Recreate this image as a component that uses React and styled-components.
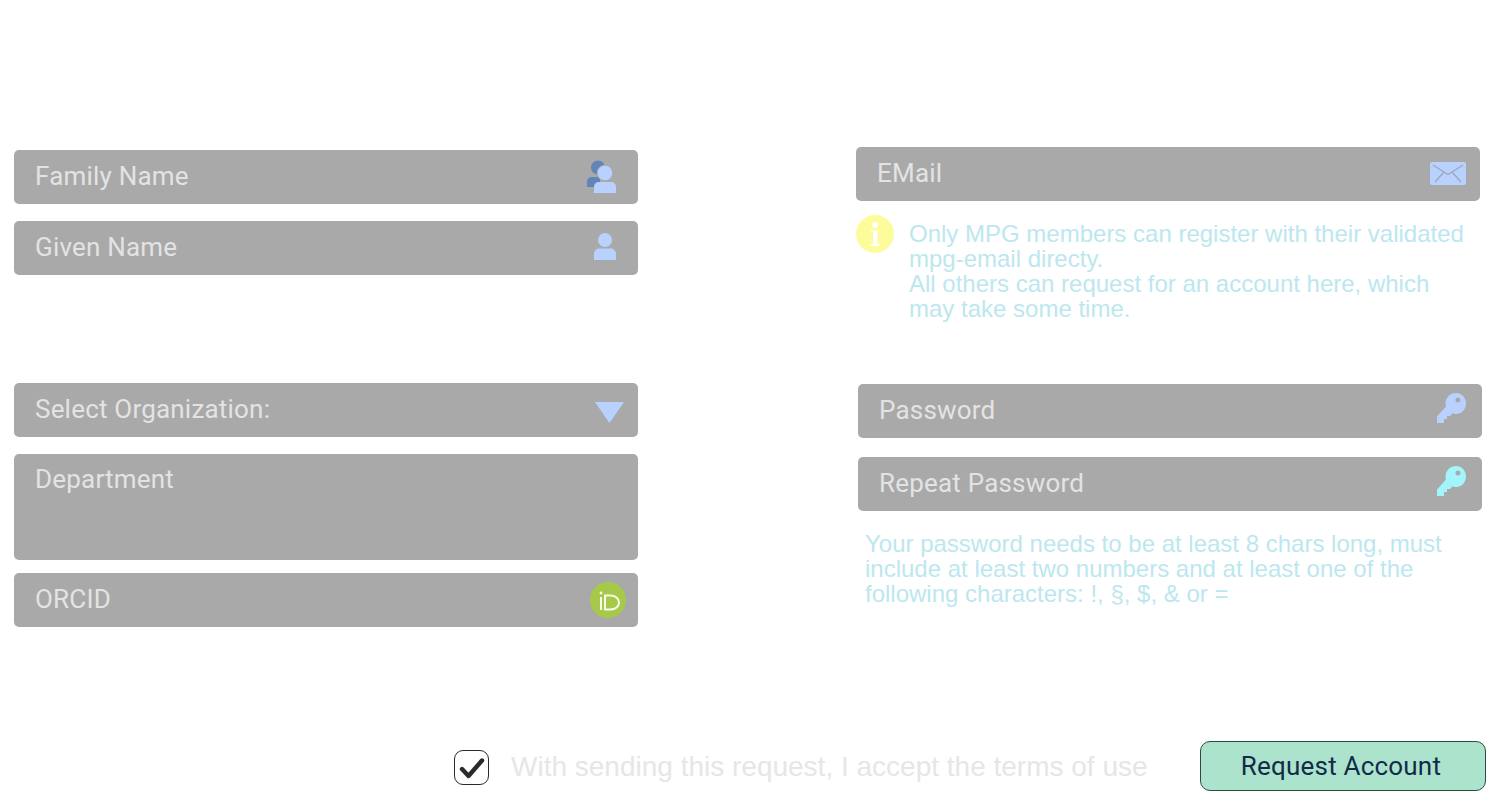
import React from "react";
import styled, { createGlobalStyle } from "styled-components";

const Global = createGlobalStyle`
  html, body { margin: 0; padding: 0; background: #fff; }
  body { font-family: "Roboto", sans-serif; }
`;

const Page = styled.div`
  width: 1486px;
  height: 791px;
  overflow: hidden;
  display: flex;
  flex-direction: column;
`;

const Columns = styled.div`
  display: flex;
  height: 741px;
`;

const LeftColumn = styled.div`
  width: 624px;
  margin-left: 14px;
  padding-top: 150px;
  display: flex;
  flex-direction: column;
`;

const RightColumn = styled.div`
  width: 626px;
  margin-left: 218px;
  padding-top: 147px;
  display: flex;
  flex-direction: column;
`;

const Field = styled.div`
  box-sizing: border-box;
  flex: none;
  width: 624px;
  height: ${(p) => p.$height || 54}px;
  margin-top: ${(p) => p.$top || 0}px;
  margin-left: ${(p) => p.$left || 0}px;
  padding: ${(p) => (p.$tall ? "8px" : "0")} 12px 2px 21px;
  background: #a9a9a9;
  border-radius: 5px;
  display: flex;
  align-items: ${(p) => (p.$tall ? "flex-start" : "center")};
  justify-content: space-between;
  color: #e3e3e3;
  font-size: 26px;
  letter-spacing: 0.2px;
  line-height: 34px;
`;

const IconSlot = styled.span`
  display: flex;
  margin-right: ${(p) => p.$right || 0}px;
  margin-top: ${(p) => p.$down || 0}px;
`;

const InfoRow = styled.div`
  display: flex;
  height: 104px;
  margin-top: 14px;
`;

const InfoText = styled.p`
  margin: 5.6px 0 0 15px;
  width: 570px;
  color: #bce7ef;
  font: 24px/25px "Liberation Sans", sans-serif;
`;

const PasswordNote = styled.p`
  margin: 20px 0 0 9px;
  width: 610px;
  color: #bce7ef;
  font: 24px/25px "Liberation Sans", sans-serif;
`;

const Footer = styled.div`
  display: flex;
  align-items: center;
  height: 50px;
  padding-left: 454px;
`;

const Check = styled.span`
  box-sizing: border-box;
  width: 35px;
  height: 35px;
  margin-top: 3px;
  border: 1px solid #2b2b2b;
  border-radius: 9px;
  display: flex;
  align-items: center;
  justify-content: center;
`;

const Terms = styled.span`
  margin-left: 22px;
  padding-top: 2px;
  width: 667px;
  flex: none;
  padding-right: 22px;
  color: #e6e6e6;
  font: 28px/34px "Liberation Sans", sans-serif;
  white-space: nowrap;
`;

const SubmitButton = styled.button`
  box-sizing: border-box;
  flex: none;
  width: 286px;
  height: 50px;
  padding: 0 4px 0 0;
  background: #ace3cd;
  border: 1px solid #2e4a44;
  border-radius: 10px;
  color: #122c48;
  font: 26px "Roboto", sans-serif;
  letter-spacing: 0.2px;
`;

const PairIcon = () => (
  <svg width="29" height="33" viewBox="0 0 29 33">
    <g fill="#6384b8">
      <circle cx="11" cy="7.500" r="7" />
      <path d="M0 27v-5c0-3 2-5 5-5h8v10z" />
    </g>
    <circle cx="18" cy="13" r="7.800" fill="#b8d1ff" stroke="#a9a9a9" strokeWidth="1" />
    <path d="M7 33v-6c0-3 2-5 5-5h12c3 0 5 2 5 5v6z" fill="#b8d1ff" />
  </svg>
);

const PersonIcon = () => (
  <svg width="22" height="27" viewBox="0 0 22 27">
    <circle cx="11" cy="7" r="7" fill="#b8d1ff" />
    <path d="M0 27v-6c0-3 2-5.500 5-5.500h12c3 0 5 2.500 5 5.500v6z" fill="#b8d1ff" />
  </svg>
);

const TriangleIcon = () => (
  <svg width="29" height="21" viewBox="0 0 29 21">
    <path d="M0 0h29L14.500 21z" fill="#b8d1ff" />
  </svg>
);

const OrcidIcon = () => (
  <svg width="36" height="36" viewBox="0 0 36 36">
    <circle cx="18" cy="18" r="18" fill="#a6c94a" />
    <g fill="none" stroke="#f7faec" strokeWidth="2">
      <path d="M11 15v13" />
      <path d="M15 13.500v14h5.500c4.800 0 8.500-3 8.500-7s-3.700-7-8.500-7z" />
    </g>
    <circle cx="11" cy="11" r="1.400" fill="#f7faec" />
  </svg>
);

const MailIcon = () => (
  <svg width="36" height="23" viewBox="0 0 36 23">
    <rect width="36" height="23" rx="2" fill="#b8d1ff" />
    <path d="M3 3l15 9.500L33 3M5 20l9-10M31 20L22 10" fill="none" stroke="#a0a6b4" strokeWidth="1.200" />
  </svg>
);

const KeyIcon = ({ color }) => (
  <svg width="29" height="30" viewBox="0 0 29 30">
    <path
      fillRule="evenodd"
      fill={color}
      d="M19 0c5.800 0 10 4.700 10 10.500S24.800 21 19 21c-1.500 0-2.500-.3-3.500-.8L13 23h-3v3H7v4H0v-6.500L9 13.500c-.4-1-.5-2-.5-3C8.500 4.700 13.200 0 19 0zm2 4.500a2.500 2.500 0 1 0 0 5 2.500 2.500 0 0 0 0-5z"
    />
  </svg>
);

const InfoIcon = () => (
  <svg width="38" height="38" viewBox="0 0 38 38">
    <circle cx="19" cy="19" r="19" fill="#fcfc9b" />
    <circle cx="19" cy="10" r="3" fill="#fff" />
    <path d="M15 15.500h6.500v14H24v1.500h-9.500v-1.500H17v-12.500h-2z" fill="#fff" />
  </svg>
);

const CheckIcon = () => (
  <svg width="26" height="22" viewBox="0 0 26 22">
    <path d="M3 12l6.500 7L23 3.500" fill="none" stroke="#2b2b2b" strokeWidth="4.400" strokeLinecap="round" strokeLinejoin="round" />
  </svg>
);

export default function App() {
  return (
    <Page>
      <Global />
      <Columns>
        <LeftColumn>
          <Field>
            Family Name
            <IconSlot $right={10} $down={1}><PairIcon /></IconSlot>
          </Field>
          <Field $top={17}>
            Given Name
            <IconSlot $right={10} $down={-1}><PersonIcon /></IconSlot>
          </Field>
          <Field $top={108}>
            Select Organization:
            <IconSlot $right={2} $down={6}><TriangleIcon /></IconSlot>
          </Field>
          <Field $top={17} $height={106} $tall>Department</Field>
          <Field $top={13}>
            ORCID
            <IconSlot $down={2}><OrcidIcon /></IconSlot>
          </Field>
        </LeftColumn>
        <RightColumn>
          <Field>
            EMail
            <IconSlot $right={2}><MailIcon /></IconSlot>
          </Field>
          <InfoRow>
            <InfoIcon />
            <InfoText>
              Only MPG members can register with their validated mpg-email directy.
              <br />
              All others can request for an account here, which may take some time.
            </InfoText>
          </InfoRow>
          <Field $top={65} $left={2}>
            Password
            <IconSlot $right={4} $down={-4}><KeyIcon color="#b8d1ff" /></IconSlot>
          </Field>
          <Field $top={19} $left={2}>
            Repeat Password
            <IconSlot $right={4} $down={-4}><KeyIcon color="#a4f4fb" /></IconSlot>
          </Field>
          <PasswordNote>
            Your password needs to be at least 8 chars long, must include at least two numbers and at least one of the following characters: !, §, $, &amp; or =
          </PasswordNote>
        </RightColumn>
      </Columns>
      <Footer>
        <Check><CheckIcon /></Check>
        <Terms>With sending this request, I accept the terms of use</Terms>
        <SubmitButton>Request Account</SubmitButton>
      </Footer>
    </Page>
  );
}
